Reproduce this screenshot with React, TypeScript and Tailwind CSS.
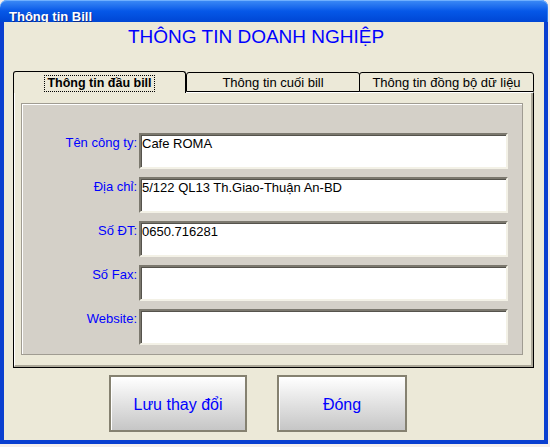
import React from "react";

const fields = [
  { label: "Tên công ty:", value: "Cafe ROMA" },
  { label: "Địa chỉ:", value: "5/122 QL13 Th.Giao-Thuận An-BD" },
  { label: "Số ĐT:", value: "0650.716281" },
  { label: "Số Fax:", value: "" },
  { label: "Website:", value: "" },
];

export default function App() {
  return (
    <div className="w-[550px] h-[447px] bg-[#f5efec] font-['Liberation_Sans',Arial,sans-serif]">
      <div className="w-[548px] h-[444px] flex flex-col">
        {/* title bar */}
        <div className="h-[22px] rounded-t-[7px] bg-gradient-to-b from-[#3d8cf6] via-[#0658e8] to-[#0046d4] shadow-[inset_0_1px_0_#6fb0ff,inset_-1px_0_0_#2f7cf0] pl-[9px] pt-[4px]">
          <span className="text-white font-bold text-[13px] leading-[15px] [text-shadow:1px_1px_0_#0a2a8a]">
            Thông tin Bill
          </span>
        </div>

        <div className="flex-1 flex flex-col bg-[#ece9d8] border-l-4 border-r-4 border-b-4 border-l-[#0a3fd0] border-r-[#0a3fd0] border-b-[#0a3fd0]">
          {/* header */}
          <div className="pt-[4px] pl-[124px] text-[19px] leading-[22px] text-[#0000ff]">
            THÔNG TIN DOANH NGHIỆP
          </div>

          {/* tab control */}
          <div className="mt-[23px] ml-[9px] w-[521px]">
            <div className="flex items-end h-[21px]">
              <div className="relative z-10 -mb-px h-[22px] w-[173px] rounded-t-[3px] border-l border-r border-t border-black bg-[#ece9d8] flex items-center justify-center">
                <span className="h-[17px] mt-[2px] px-[2px] border border-dotted border-black text-[12.5px] leading-[15px] font-bold text-black">
                  Thông tin đầu bill
                </span>
              </div>
              <div className="h-[20px] w-[174px] rounded-t-[3px] border border-black bg-[#ece9d8] flex items-center justify-center text-[13px] leading-[15px] text-black">
                Thông tin cuối bill
              </div>
              <div className="-ml-px h-[20px] w-[175px] rounded-t-[3px] border border-black bg-[#ece9d8] flex items-center justify-center text-[13px] leading-[15px] text-black">
                Thông tin đồng bộ dữ liệu
              </div>
            </div>

            {/* tab page */}
            <div className="h-[276px] border-l border-r border-b border-t border-black border-t-white">
              <div className="h-full border-l border-l-white border-r-2 border-b-2 border-r-[#aca899] border-b-[#aca899] pl-[6px] pr-[8px] pt-[10px]">
                <div className="h-[252px] bg-[#d4d0c8] border border-[#a09c92] shadow-[inset_1px_1px_0_#ffffff] pt-[29px] flex flex-col gap-[8px]">
                  {fields.map((f) => (
                    <div key={f.label} className="flex h-[36px]">
                      <div className="w-[117px] pr-[2px] pt-[2px] text-right text-[13px] leading-[15px] text-[#0000ff]">
                        {f.label}
                      </div>
                      <div className="w-[369px] bg-white border-2 border-t-[#7b786e] border-l-[#7b786e] border-r-[#f3f1e6] border-b-[#f3f1e6] shadow-[inset_1px_1px_0_#55534c] pl-[1px] pt-[1px] text-[13px] leading-[15px] text-black">
                        {f.value}
                      </div>
                    </div>
                  ))}
                </div>
              </div>
            </div>
          </div>

          {/* buttons */}
          <div className="mt-[7px] ml-[105px] flex gap-[30px]">
            <button className="w-[138px] h-[57px] pt-[3px] border-2 border-[#858170] bg-gradient-to-b from-white to-[#c6c6c6] shadow-[inset_1px_1px_0_#ffffff] text-[16px] text-[#0000ff]">
              Lưu thay đổi
            </button>
            <button className="w-[130px] h-[57px] pt-[3px] border-2 border-[#858170] bg-gradient-to-b from-white to-[#c6c6c6] shadow-[inset_1px_1px_0_#ffffff] text-[16px] text-[#0000ff]">
              Đóng
            </button>
          </div>
        </div>
      </div>
    </div>
  );
}
